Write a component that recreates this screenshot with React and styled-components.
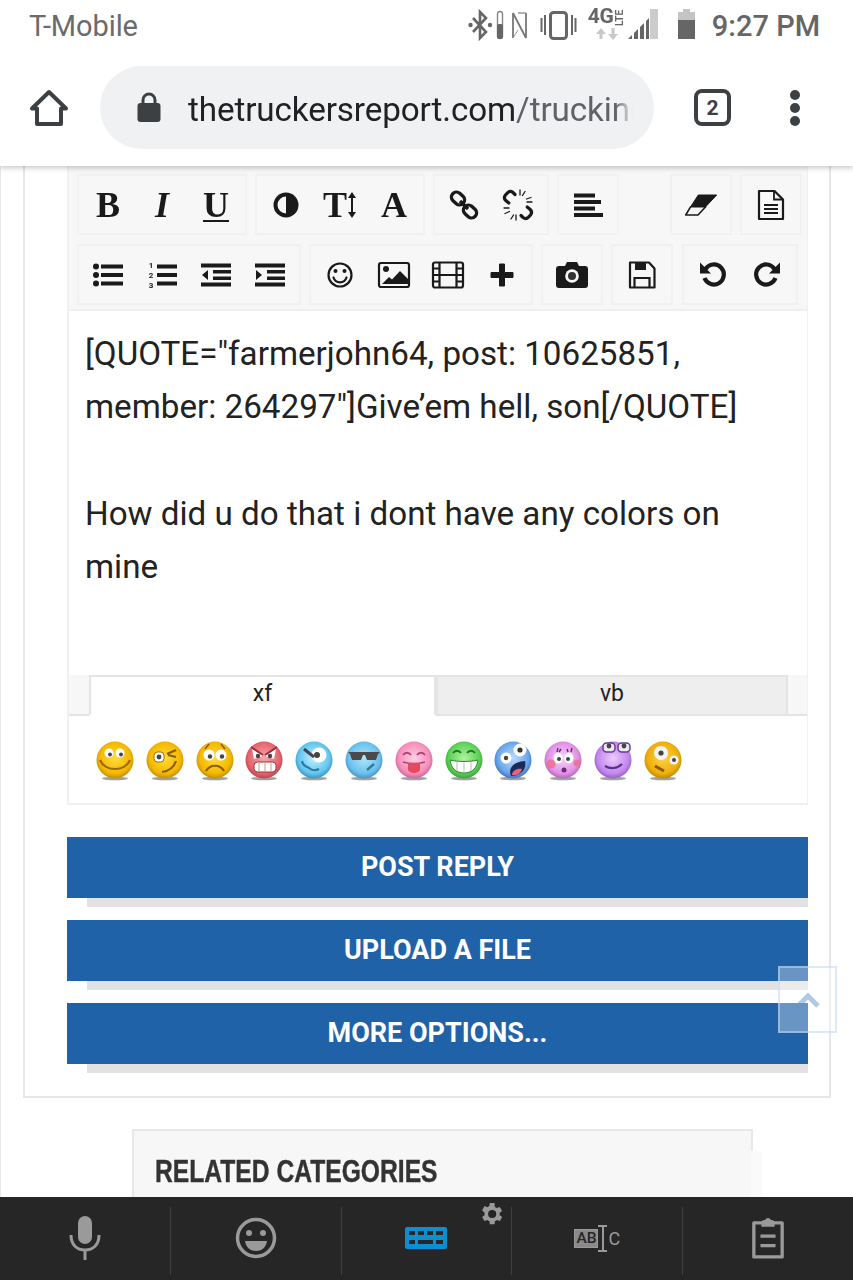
import React from "react";
import styled, { createGlobalStyle } from "styled-components";

const Global = createGlobalStyle`
  html, body { margin: 0; padding: 0; background: #fff; }
  * { box-sizing: border-box; }
`;

const Screen = styled.div`
  width: 853px; height: 1280px; display: flex; flex-direction: column; overflow: hidden;
  position: relative; background: #fff; font-family: Roboto, "Liberation Sans", sans-serif;
`;
const Chrome = styled.header`
  height: 166px; flex: none; background: #fff; box-shadow: 0 2px 5px rgba(0,0,0,.22);
  position: relative; z-index: 2; display: flex; flex-direction: column;
`;
const StatusBar = styled.div`
  height: 52px; padding: 0 33px 0 29px; display: flex; align-items: center; justify-content: space-between; color: #666;
`;
const Carrier = styled.span`font-size: 29px; letter-spacing: -.1px; color: #6b6b6b;`;
const StatusRight = styled.div`display: flex; align-items: center;`;
const Clock = styled.span`font-size: 29px; font-weight: 500; color: #666; margin-left: 17px;`;
const StatusIconsWrap = styled.div`
  position: relative; display: flex; margin-right: 6px; filter: blur(.35px);
`;
const Net = styled.span`
  position: absolute; left: 120px; top: 2px; font-size: 21px; line-height: 22px; font-weight: 700; letter-spacing: -.5px; color: #666;
`;
const Lte = styled.span`
  position: absolute; left: 144px; top: 10px; font-size: 10px; line-height: 10px; font-weight: 700; color: #666; transform: rotate(-90deg);
`;
const BatteryWrap = styled.div`display: flex; margin-bottom: 4px; filter: blur(.35px);`;
const AddressRow = styled.div`
  flex: 1; display: flex; align-items: center; padding: 0 0 3px 29px;
`;
const UrlPill = styled.div`
  width: 554px; height: 83px; margin-left: 31px; border-radius: 42px; background: #f0f1f3;
  display: flex; align-items: center; padding-left: 36px; overflow: hidden; flex: none;
`;
const Url = styled.div`
  width: 445px; margin-left: 26px; padding-top: 3px; font-size: 33.2px; white-space: nowrap; overflow: hidden; color: #5f6368; letter-spacing: -.1px;
  -webkit-mask-image: linear-gradient(to right, #000 96%, transparent);
  b { font-weight: 400; color: #202124; }
`;
const TabCount = styled.div`
  width: 37px; height: 37px; flex: none; border: 4px solid #3c4043; border-radius: 8px; margin-left: 40px;
  display: flex; align-items: center; justify-content: center; font-size: 21px; font-weight: 700; color: #3c4043;
`;
const Dots = styled.div`
  margin-left: 59px; display: flex; flex-direction: column; gap: 3px;
  i { display: block; width: 10px; height: 10px; border-radius: 50%; background: #3c4043; }
`;

const Main = styled.main`
  flex: 1; min-height: 0; overflow: hidden; padding: 0 22px 0 22px; position: relative; border-left: 1px solid #e8e8e8;
`;
const Outer = styled.section`
  border: 2px solid #e6e6e6; border-top: 0; padding: 0 21px 32px 42px; background: #fff;
`;
const Editor = styled.div`border: 2px solid #f1f1f1; border-top: 0; border-right-width: 1px;`;
const Toolbar = styled.div`
  height: 145px; background: #f7f7f7; border-bottom: 2px solid #efefef; padding: 8px 0 0 8px; display: flex; flex-direction: column; gap: 9px;
`;
const ToolRow = styled.div`display: flex; gap: 8px;`;
const Group = styled.div`
  height: 61px; padding: 0 2px; display: flex; border: 2px solid #f1f1f1; margin-left: ${p => p.$push || 0}px;
`;
const Tool = styled.div`
  width: 54px; height: 100%; display: flex; align-items: center; justify-content: center; color: #1a1a1a;
  font-family: "Liberation Serif", serif; font-weight: 700; font-size: 36px; filter: blur(.3px);
`;
const UnderlinedGlyph = styled.span`
  text-decoration: underline; text-decoration-thickness: 2px; text-underline-offset: 3px; font-weight: 700;
`;
const TextSizeGlyph = styled.span`display: flex; align-items: center;`;
const TextArea = styled.div`
  height: 364px; padding: 16px 16px; background: #fff; font-size: 33.2px; line-height: 53.2px; color: #222;
`;
const Line = styled.div`min-height: 53.2px; white-space: nowrap;`;
const Tabs = styled.div`display: flex; height: 41px; background: #f7f7f7; border-bottom: 2px solid #e4e4e4; padding-left: 20px;`;
const TabItem = styled.div`
  width: ${p => p.$w}px; height: 41px; display: flex; align-items: center; justify-content: center; padding-bottom: 4px;
  font-size: 23px; color: #222; border: 2px solid #e4e4e4;
  background: ${p => p.$active ? "#fff" : "#eee"};
  border-bottom-color: ${p => p.$active ? "#fff" : "#e4e4e4"};
`;
const SmileyRow = styled.div`height: 87px; padding: 25px 0 0 27px; display: flex; gap: 11.8px; background: #fff;`;
const SmileySvg = styled.svg`display: block; filter: blur(.55px); flex: none;`;
const Buttons = styled.div`margin-top: 32px; display: flex; flex-direction: column; gap: 22px;`;
const BtnOuter = styled.div`
  height: 61px; background: #1f62a8; position: relative;
  &::after { content: ""; position: absolute; left: 20px; right: 0; top: 61px; height: 9px; background: #e2e2e2; }
`;
const BtnBody = styled.div`
  height: 100%; display: flex; align-items: center; justify-content: center; color: #fff; font-size: 27px; font-weight: 700; padding-bottom: 2px;
`;
const Related = styled.section`
  margin: 31px 78px 0 109px; height: 122px; background: #f7f7f7; border: 2px solid #e8e8e8; padding: 23px 21px; position: relative;
  &::after { content: ""; position: absolute; left: 100%; top: 20px; bottom: 0; width: 11px; background: #fafafa; }
`;
const RelatedTitle = styled.h3`
  margin: 0; font-family: "Liberation Sans", sans-serif; font-weight: 700; font-size: 31px; line-height: 36px; color: #333; white-space: nowrap;
  -webkit-text-stroke: .4px #333; transform: scaleX(.795); transform-origin: left center;
`;
const ScrollTop = styled.div`
  position: absolute; left: 778px; top: 966px; width: 59px; height: 67px; z-index: 3; background: rgba(255,255,255,.33);
  border: 2px solid rgba(190,215,245,.55); display: flex; align-items: center; justify-content: center;
`;
const Keyboard = styled.footer`
  height: 83px; flex: none; background: #262626; display: flex; align-items: flex-start; padding-top: 10px; position: relative; z-index: 2;
`;
const Key = styled.div`
  flex: 1; height: 68px; display: flex; align-items: center; justify-content: center; position: relative; padding-bottom: 6px;
  & + & { border-left: 1px solid #3e3e3e; }
`;
const Gear = styled.div`position: absolute; right: 6px; top: -7px; display: flex;`;
const AbcIcon = styled.div`display: flex; align-items: center; color: #9a9a9a;`;
const AbBox = styled.span`
  background: #8a8a8a; color: #262626; font-size: 15.5px; font-weight: 500; padding: 0 1px; line-height: 17px; border: 1px solid #9a9a9a;
`;
const Caret = styled.span`
  width: 9px; height: 27px; border-top: 2px solid #9a9a9a; border-bottom: 2px solid #9a9a9a;
  background: linear-gradient(#9a9a9a,#9a9a9a) center/2px 100% no-repeat;
`;
const CLetter = styled.span`font-size: 18px; color: #9a9a9a; margin-left: 1px;`;

const ink = "#1a1a1a";
const ico = { width: 34, height: 34, viewBox: "0 0 34 34" };
const Contrast = () => <svg {...ico}><circle cx="17" cy="17" r="12.5" fill={ink}/><path d="M17 8.500a8.500 8.500 0 0 0 0 17z" fill="#f7f7f7"/></svg>;
const Link = () => <svg {...ico}><g fill="none" stroke={ink} strokeWidth="3.4" strokeLinejoin="round"><rect x="4" y="5.500" width="14" height="10" rx="4.800" transform="rotate(42 11 10.500)"/><rect x="16" y="18.500" width="14" height="10" rx="4.800" transform="rotate(42 23 23.500)"/><path d="M13 13l8 8"/></g></svg>;
const Unlink = () => <svg {...ico}><g fill="none" stroke={ink} strokeLinecap="round"><path strokeWidth="3.200" d="M14 6.500l-2-2c-2-1.500-4-1.200-5.500.3L4.500 7c-1.600 2-1.200 4 .3 5.500l3 2.500"/><path strokeWidth="3.200" d="M20 27.500l2 2c2 1.500 4 1.200 5.500-.3l2-2.200c1.600-2 1.200-4-.3-5.500l-3-2.500"/><path strokeWidth="1.300" d="M19 2v5M24 3.500l-2.500 4M30 9.500l-4.500 1.500M31 14h-5M3 20h5M4 25.500l4.500-2M10 31l2.500-4M15 32v-5"/></g></svg>;
const Align = () => <svg {...ico}><path d="M3 5.500h21v4H3zM3 12h27v4H3zM3 18.500h21v4H3zM3 25h29v4H3z" fill={ink}/></svg>;
const Eraser = () => <svg {...ico}><path d="M14.300 7H32.700L21.700 18.700H6.700z" fill={ink} stroke={ink} strokeLinejoin="round"/><path d="M6.700 18.700h15L14 27H1.700z" fill="#f7f7f7" stroke={ink} strokeWidth="1.600" strokeLinejoin="round"/></svg>;
const Doc = () => <svg {...ico}><path d="M5 3h15.500l8.500 8.500V31H5z" fill="none" stroke={ink} strokeWidth="2.200" strokeLinejoin="round"/><path d="M20 3v8.500h9" fill="none" stroke={ink} strokeWidth="1.800"/><path d="M10 17h14M10 21h14M10 25h14" stroke={ink} strokeWidth="1.800"/></svg>;
const ListUl = () => <svg {...ico}><g fill={ink}><circle cx="5" cy="8.500" r="3"/><circle cx="5" cy="17" r="3"/><circle cx="5" cy="25.500" r="3"/><path d="M10 6.500h22v4H10zM10 15h22v4H10zM10 23.500h22v4H10z"/></g></svg>;
const ListOl = () => <svg {...ico}><path d="M12 6.500h20v4H12zM12 15h20v4H12zM12 23.500h20v4H12z" fill={ink}/><g fill={ink} fontFamily="Roboto" fontWeight="700" fontSize="8" textAnchor="middle"><text x="6" y="10">1</text><text x="6" y="20">2</text><text x="6" y="30">3</text></g></svg>;
const Outdent = () => <svg {...ico}><path d="M2 5.500h30v4H2zM14 12h18v3.500H14zM14 18.500h18V22H14zM2 24.500h30v4H2zM9 12v10l-6-5z" fill={ink}/></svg>;
const Indent = () => <svg {...ico}><path d="M2 5.500h30v4H2zM14 12h18v3.500H14zM14 18.500h18V22H14zM2 24.500h30v4H2zM3 12v10l6-5z" fill={ink}/></svg>;
const Smile = () => <svg {...ico}><g fill="none" stroke={ink} strokeWidth="2.200"><circle cx="17" cy="17" r="11.500"/><path d="M10.500 19.500c2 6.500 11 6.500 13 0" strokeLinecap="round"/></g><circle cx="12.500" cy="13" r="2" fill={ink}/><circle cx="21.500" cy="13" r="2" fill={ink}/></svg>;
const ImageIcon = () => <svg {...ico}><rect x="2" y="5" width="30" height="24" rx="2" fill="#f7f7f7" stroke={ink} strokeWidth="2.200"/><circle cx="9" cy="11" r="3" fill={ink}/><path d="M5 26l7-7 3 2.500 8-8.500 8 8v5z" fill={ink}/></svg>;
const Film = () => <svg {...ico}><rect x="2" y="4.500" width="30" height="25" rx="2" fill="none" stroke={ink} strokeWidth="2.200"/><path d="M8.500 4.500v25M25.500 4.500v25M8.500 17h17M2 10.500h6.500M2 17h6.500M2 23.500h6.500M25.500 10.500H32M25.500 17H32M25.500 23.500H32" stroke={ink} strokeWidth="2.200" fill="none"/></svg>;
const Plus = () => <svg {...ico}><path d="M14.500 6h5v8.500H28v5h-8.500V28h-5v-8.500H6v-5h8.500z" fill={ink} stroke={ink} strokeLinejoin="round"/></svg>;
const Camera = () => <svg {...ico}><path d="M4 8h6l2-4h10l2 4h6a3 3 0 0 1 3 3v16a3 3 0 0 1-3 3H4a3 3 0 0 1-3-3V11a3 3 0 0 1 3-3z" fill={ink}/><circle cx="17" cy="18" r="6.800" fill="#f7f7f7"/><circle cx="17" cy="18" r="4" fill="#333"/></svg>;
const Floppy = () => <svg {...ico}><path d="M5 4.500h19l5.500 6V29.500H5z" fill="none" stroke={ink} strokeWidth="2.200" strokeLinejoin="round"/><path d="M10 4.500h11v7.500H10z" fill={ink}/><path d="M9.500 29.500V20h15v9.500" fill="none" stroke={ink} strokeWidth="2.200"/></svg>;
const Undo = () => <svg {...ico}><path d="M8.500 20a10 10 0 1 0 1-9" fill="none" stroke={ink} strokeWidth="4.200"/><path d="M4 4.500v11h11z" fill={ink}/></svg>;
const Redo = () => <svg {...ico}><g transform="matrix(-1 0 0 1 34 0)"><path d="M8.500 20a10 10 0 1 0 1-9" fill="none" stroke={ink} strokeWidth="4.200"/><path d="M4 4.500v11h11z" fill={ink}/></g></svg>;

const Eyes = ({ x1 = 13, x2 = 23, y = 12, r = 4, p = 2 }) => (
  <g>
    <circle cx={x1} cy={y} r={r} fill="#fff" /><circle cx={x2} cy={y} r={r} fill="#fff" />
    <circle cx={x1 + 1} cy={y + 1.500} r={p} fill="#444" /><circle cx={x2 + 1} cy={y + 1.500} r={p} fill="#444" />
  </g>
);
const yellow = ["#ffdc3c", "#f5b800", "#b98400"];
const faces = [
  { c: yellow, d: <g><Eyes x1={13} x2={24} y={12} r={4.500}/><path d="M4 19c5 12 25 12 30 0" fill="none" stroke="#9a6c00" strokeWidth="2.200"/></g> },
  { c: yellow, d: <g><rect x="8" y="11" width="10" height="10" rx="3.500" fill="#fff" stroke="#9a6c00"/><circle cx="13" cy="16" r="2.400" fill="#444"/><path d="M21 13l9-4M22 14l8 2" stroke="#8a5d00" strokeWidth="2.200" fill="none"/><path d="M16 31c7-1 12-5 14-11" stroke="#8a5d00" strokeWidth="2.200" fill="none"/></g> },
  { c: yellow, d: <g><Eyes x1={13} x2={25} y={14} r={5.500} p={2.200}/><path d="M10 30c4-7 14-7 18 0" fill="none" stroke="#8a5d00" strokeWidth="2.200"/><path d="M9 8l4-5M29 8l-4-5" stroke="#8a5d00" strokeWidth="1.600"/></g> },
  { c: ["#f7a8ac", "#e4666f", "#b43a44"], d: <g><path d="M7 8l11 7-9 3zM31 8l-11 7 9 3z" fill="#fff"/><path d="M6 6l12 8M32 6l-12 8" stroke="#a32b35" strokeWidth="2"/><circle cx="13" cy="15" r="2.200" fill="#444"/><circle cx="25" cy="15" r="2.200" fill="#444"/><rect x="9" y="21" width="22" height="10" rx="3.500" fill="#fff" stroke="#a32b35"/><path d="M14 21v10M20 21v10M26 21v10" stroke="#c98"/></g> },
  { c: ["#c2f0ff", "#62c6ee", "#2f89ba"], d: <g><circle cx="24" cy="14" r="7.500" fill="#fff"/><circle cx="22" cy="14" r="3" fill="#444"/><path d="M9 8l10 8" stroke="#445" strokeWidth="3"/><path d="M7 20c1 6 5 5 7 7s6 3 10 1" fill="none" stroke="#2a7ba8" strokeWidth="2.200"/></g> },
  { c: ["#b0e6fb", "#6cc1ec", "#3889bf"], d: <g><path d="M3 11h32l-2 2-2 6H22l-2-5h-2l-2 5H7l-2-6z" fill="#4a4a4a"/><path d="M22 29l7-6" stroke="#2a7ba8" strokeWidth="2.400"/></g> },
  { c: ["#ffd0e3", "#f58fbb", "#c9578d"], d: <g><path d="M8 14c2-3 6-3 8 0M22 14c2-3 6-3 8 0" fill="none" stroke="#b04278" strokeWidth="1.800"/><path d="M8 21c7 2 15 2 22 0" stroke="#b04278" strokeWidth="1.500" fill="none"/><path d="M13 22h12v7c-2 4-10 4-12 0z" fill="#e8485e"/></g> },
  { c: ["#b2f2a0", "#5dd058", "#2e9a30"], d: <g><path d="M8 12c2-3 6-3 8 0M22 12c2-3 6-3 8 0" fill="none" stroke="#1d7a1d" strokeWidth="1.800"/><path d="M5 19c9 2 19 2 28 0-1 8-6 13-14 13S6 27 5 19z" fill="#fff" stroke="#2a8a2a"/><path d="M12 21v9M19 21.500V32M26 21v9" stroke="#bbb"/></g> },
  { c: ["#bcdcfb", "#6ba6ea", "#3168b8"], d: <g><circle cx="12" cy="17" r="5.500" fill="#fff"/><circle cx="12" cy="17" r="2.200" fill="#444"/><circle cx="26" cy="9" r="6.500" fill="#fff"/><circle cx="26" cy="9" r="2.600" fill="#333"/><path d="M17 35c-3-7 1-14 14-15 2 8-4 15-14 15z" fill="#1c2c59"/><path d="M18 34c0-4 5-7 10-6-1 4-5 7-10 6z" fill="#f0607a"/></g> },
  { c: ["#f8d4fa", "#e091e6", "#ad58b6"], d: <g><ellipse cx="14" cy="17" rx="4.500" ry="5.500" fill="#fff"/><ellipse cx="25" cy="17" rx="4.500" ry="5.500" fill="#fff"/><circle cx="15" cy="18" r="2" fill="#444"/><circle cx="24" cy="18" r="2" fill="#444"/><path d="M13 11l1-4M15 11l2-3M24 11l-1-3M27 11l1-4" stroke="#702a78" strokeWidth="1.400"/><circle cx="7" cy="23" r="4.500" fill="#f0708c" opacity=".85"/><circle cx="33" cy="22" r="3.500" fill="#f0708c" opacity=".85"/><circle cx="20" cy="29" r="2.500" fill="#702a78"/></g> },
  { c: ["#eccbfc", "#c288ee", "#8e55c4"], d: <g><rect x="9" y="2" width="12" height="9" rx="3.500" fill="#e9e9e9" stroke="#6a3a98" strokeWidth="1.500"/><rect x="24" y="2" width="12" height="9" rx="3.500" fill="#e9e9e9" stroke="#6a3a98" strokeWidth="1.500"/><circle cx="15" cy="5" r="2.400" fill="#444"/><circle cx="30" cy="5" r="2.400" fill="#444"/><path d="M11 25c5 3 12 3 17-2" fill="none" stroke="#5d2f8c" strokeWidth="2.200"/></g> },
  { c: ["#ffd24a", "#efaf0c", "#b67e00"], d: <g><circle cx="17" cy="12" r="7" fill="#f4f4f4"/><circle cx="17" cy="12" r="2.600" fill="#444"/><circle cx="30" cy="19" r="4.500" fill="#f4f4f4"/><circle cx="30" cy="19" r="2" fill="#444"/><path d="M11 25l9 5" stroke="#8a5d00" strokeWidth="2.800"/></g> },
];
const SmileyIcon = ({ i }) => {
  const f = faces[i];
  return (
    <SmileySvg width="38" height="42" viewBox="0 0 38 42">
      <defs>
        <radialGradient id={`g${i}`} cx="50%" cy="45%" r="58%">
          <stop offset="0" stopColor={f.c[0]} />
          <stop offset=".72" stopColor={f.c[1]} />
          <stop offset="1" stopColor={f.c[2]} />
        </radialGradient>
      </defs>
      <ellipse cx="19" cy="37.500" rx="13" ry="1.800" fill="#777" opacity=".7" />
      <circle cx="19" cy="19" r="18.500" fill={`url(#g${i})`} />
      {f.d}
    </SmileySvg>
  );
};

const Home = () => <svg width="40" height="40" viewBox="0 0 40 40"><path d="M20 4L3 20.500h5V36h24V20.500h5z" fill="none" stroke="#3c4043" strokeWidth="4" strokeLinejoin="round"/></svg>;
const Lock = () => <svg width="26" height="32" viewBox="0 0 26 32"><rect x="1.500" y="11" width="23" height="19" rx="3" fill="#3c4043"/><path d="M7 12V8a6 6 0 0 1 12 0v4" fill="none" stroke="#3c4043" strokeWidth="3"/></svg>;
const StatusIcons = () => (
  <svg width="204" height="46" viewBox="0 0 204 46" fill="#666">
    <path d="M5 15l13 14-6 6V9l6 6-13 14" fill="none" stroke="#666" strokeWidth="2.600"/>
    <circle cx="2.500" cy="22" r="2.200"/><circle cx="22" cy="22" r="2.200"/>
    <rect x="29.500" y="8.500" width="5" height="27" rx="2.500" fill="none" stroke="#888" strokeWidth="1.400"/>
    <rect x="29" y="21" width="6" height="15" rx="2"/>
    <path d="M45 10v25M45 10l13 25M58 10v25" fill="none" stroke="#777" strokeWidth="1.800"/>
    <path d="M50 10h8l-8 0zM45 35l5-8" fill="none" stroke="#999" strokeWidth="1"/>
    <rect x="82.500" y="9.500" width="16" height="26" rx="3" fill="none" stroke="#666" strokeWidth="3"/>
    <path d="M73.500 15v14M77 12v20M104 12v20M107.500 15v14" stroke="#666" strokeWidth="2"/>
    <path d="M182 36V6h8v30z" fill="#ccc"/>
    <path d="M160 36l4-4v4zM166 36v-6l4-4v10zM172 36V24l4-4v16zM178 36V18l3-3v21z" fill="#666"/>
    <path d="M133 25l-5 6h3.500v5h3v-5h3.500zM145 37l5-6h-3.500v-6h-3v6H140z" fill="#c8c8c8"/>
  </svg>
);
const Battery = () => <svg width="17" height="30" viewBox="0 0 17 30" style={{ display: "block" }}><path d="M5 0h7v3h5v9H0V3h5z" fill="#c4c4c4"/><rect y="11" width="17" height="19" fill="#666"/></svg>;

function ActionButton({ children }) {
  return <BtnOuter><BtnBody>{children}</BtnBody></BtnOuter>;
}

export default function App() {
  return (
    <Screen>
      <Global />
      <Chrome>
        <StatusBar>
          <Carrier>T-Mobile</Carrier>
          <StatusRight>
            <StatusIconsWrap><StatusIcons /><Net>4G</Net><Lte>LTE</Lte></StatusIconsWrap>
            <BatteryWrap><Battery /></BatteryWrap>
            <Clock>9:27 PM</Clock>
          </StatusRight>
        </StatusBar>
        <AddressRow>
          <Home />
          <UrlPill>
            <Lock />
            <Url><b>thetruckersreport.com</b>/trucking</Url>
          </UrlPill>
          <TabCount>2</TabCount>
          <Dots><i /><i /><i /></Dots>
        </AddressRow>
      </Chrome>
      <Main>
        <Outer>
          <Editor>
            <Toolbar>
              <ToolRow>
                <Group><Tool>B</Tool><Tool><i>I</i></Tool><Tool><UnderlinedGlyph>U</UnderlinedGlyph></Tool></Group>
                <Group><Tool><Contrast /></Tool><Tool><TextSizeGlyph>T<svg width="10" height="28" viewBox="0 0 10 28"><path d="M5 1l4 6H6v14h3l-4 6-4-6h3V7H1z" fill={ink}/></svg></TextSizeGlyph></Tool><Tool>A</Tool></Group>
                <Group><Tool><Link /></Tool><Tool><Unlink /></Tool></Group>
                <Group><Tool><Align /></Tool></Group>
                <Group $push={43}><Tool><Eraser /></Tool></Group>
                <Group><Tool><Doc /></Tool></Group>
              </ToolRow>
              <ToolRow>
                <Group><Tool><ListUl /></Tool><Tool><ListOl /></Tool><Tool><Outdent /></Tool><Tool><Indent /></Tool></Group>
                <Group><Tool><Smile /></Tool><Tool><ImageIcon /></Tool><Tool><Film /></Tool><Tool><Plus /></Tool></Group>
                <Group><Tool><Camera /></Tool></Group>
                <Group><Tool><Floppy /></Tool></Group>
                <Group $push={1}><Tool><Undo /></Tool><Tool><Redo /></Tool></Group>
              </ToolRow>
            </Toolbar>
            <TextArea>
              <Line>[QUOTE="farmerjohn64, post: 10625851,</Line>
              <Line>member: 264297"]Give’em hell, son[/QUOTE]</Line>
              <Line />
              <Line>How did u do that i dont have any colors on</Line>
              <Line>mine</Line>
            </TextArea>
            <Tabs>
              <TabItem $active $w={347}>xf</TabItem>
              <TabItem $w={352}>vb</TabItem>
            </Tabs>
            <SmileyRow>
              {faces.map((_, i) => <SmileyIcon key={i} i={i} />)}
            </SmileyRow>
          </Editor>
          <Buttons>
            <ActionButton>POST REPLY</ActionButton>
            <ActionButton>UPLOAD A FILE</ActionButton>
            <ActionButton>MORE OPTIONS...</ActionButton>
          </Buttons>
        </Outer>
        <Related>
          <RelatedTitle>RELATED CATEGORIES</RelatedTitle>
        </Related>
      </Main>
      <Keyboard>
        <Key><svg width="34" height="46" viewBox="0 0 34 46"><rect x="10" y="1" width="14" height="28" rx="7" fill="#9a9a9a"/><path d="M3 20c0 10 6 15 14 15s14-5 14-15M17 35v10" fill="none" stroke="#9a9a9a" strokeWidth="3"/></svg></Key>
        <Key><svg width="44" height="44" viewBox="0 0 44 44"><circle cx="22" cy="22" r="18.500" fill="none" stroke="#9a9a9a" strokeWidth="3.500"/><circle cx="15" cy="17" r="3" fill="#9a9a9a"/><circle cx="29" cy="17" r="3" fill="#9a9a9a"/><path d="M11 25h22c-1 7-6 10-11 10s-10-3-11-10z" fill="#9a9a9a"/></svg></Key>
        <Key>
          <svg width="42" height="22" viewBox="0 0 42 22"><rect width="42" height="22" rx="2" fill="#0a8fd0"/><g fill="#262626"><rect x="4" y="4" width="6" height="4"/><rect x="13" y="4" width="6" height="4"/><rect x="22" y="4" width="6" height="4"/><rect x="31" y="4" width="7" height="4"/><rect x="4" y="13" width="6" height="4"/><rect x="13" y="13" width="15" height="4"/><rect x="31" y="13" width="7" height="4"/></g></svg>
          <Gear><svg width="28" height="28" viewBox="0 0 24 24"><path fill="#9a9a9a" d="M19.400 13a7.500 7.500 0 0 0 0-2l2.100-1.600-2-3.500-2.500 1a7.500 7.500 0 0 0-1.700-1L15 2.500h-4l-.4 2.700a7.500 7.500 0 0 0-1.700 1l-2.500-1-2 3.500L6.500 11a7.500 7.500 0 0 0 0 2l-2.100 1.600 2 3.500 2.500-1a7.500 7.500 0 0 0 1.700 1l.4 2.700h4l.4-2.700a7.500 7.500 0 0 0 1.700-1l2.500 1 2-3.500zM13 15.500a3.500 3.500 0 1 1 0-7 3.500 3.500 0 0 1 0 7z"/></svg></Gear>
        </Key>
        <Key><AbcIcon><AbBox>AB</AbBox><Caret /><CLetter>C</CLetter></AbcIcon></Key>
        <Key><svg width="34" height="42" viewBox="0 0 36 44"><path d="M3 6h30v36H3z" fill="none" stroke="#9a9a9a" strokeWidth="3.500" strokeLinejoin="round"/><path d="M11 6c0-3 3-3 4-3 1-3 5-3 6 0 1 0 4 0 4 3v4H11z" fill="#9a9a9a"/><path d="M10 20h16M10 30h16" stroke="#9a9a9a" strokeWidth="3.500"/></svg></Key>
      </Keyboard>
      <ScrollTop>
        <svg width="26" height="18" viewBox="0 0 26 18"><path d="M3 15l10-10 10 10" fill="none" stroke="rgba(100,150,205,.5)" strokeWidth="5"/></svg>
      </ScrollTop>
    </Screen>
  );
}
